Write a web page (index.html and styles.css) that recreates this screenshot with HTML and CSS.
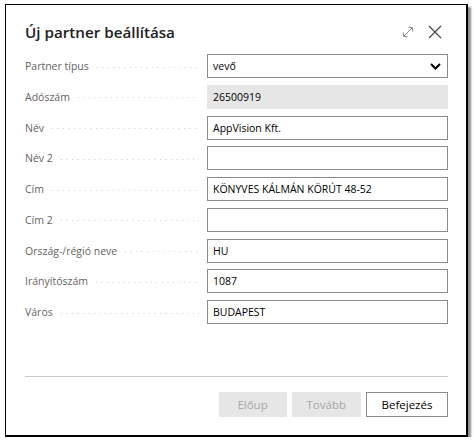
FILE: index.html
```html
<!DOCTYPE html>
<html lang="hu">
<head>
    <meta charset="UTF-8">
    <meta name="viewport" content="width=device-width, initial-scale=1.0">
    <title>Új partner beállítása</title>
    <link rel="stylesheet" href="styles.css">
</head>
<body>
    <div class="dialog">
        <div class="dialog-header">
            <h1>Új partner beállítása</h1>
            <div class="header-actions">
                <button class="icon-btn" title="Nagyítás">
                    <svg width="12" height="12" viewBox="0 0 12 12">
                        <path d="M1.5 10.5 L10.5 1.5 M1.5 10.5 L1.5 6.5 M1.5 10.5 L5.5 10.5 M10.5 1.5 L6.5 1.5 M10.5 1.5 L10.5 5.5" fill="none" stroke="#8a8a8a" stroke-width="1"/>
                    </svg>
                </button>
                <button class="icon-btn" title="Bezárás">
                    <svg width="14" height="14" viewBox="0 0 14 14">
                        <path d="M1 1 L13 13 M13 1 L1 13" fill="none" stroke="#444" stroke-width="1.2"/>
                    </svg>
                </button>
            </div>
        </div>

        <div class="form">
            <label class="field-label"><span>Partner típus</span><span class="leader"></span></label>
            <div class="field select">
                <span>vevő</span>
                <svg width="11" height="7" viewBox="0 0 11 7">
                    <path d="M1 1 L5.5 5.5 L10 1" fill="none" stroke="#000" stroke-width="2"/>
                </svg>
            </div>

            <label class="field-label"><span>Adószám</span><span class="leader"></span></label>
            <div class="field readonly">26500919</div>

            <label class="field-label"><span>Név</span><span class="leader"></span></label>
            <div class="field">AppVision Kft.</div>

            <label class="field-label"><span>Név 2</span><span class="leader"></span></label>
            <div class="field"></div>

            <label class="field-label"><span>Cím</span><span class="leader"></span></label>
            <div class="field">KÖNYVES KÁLMÁN KÖRÚT 48-52</div>

            <label class="field-label"><span>Cím 2</span><span class="leader"></span></label>
            <div class="field"></div>

            <label class="field-label"><span>Ország-/régió neve</span><span class="leader"></span></label>
            <div class="field">HU</div>

            <label class="field-label"><span>Irányítószám</span><span class="leader"></span></label>
            <div class="field">1087</div>

            <label class="field-label"><span>Város</span><span class="leader"></span></label>
            <div class="field">BUDAPEST</div>
        </div>

        <div class="dialog-footer">
            <button class="btn" disabled>Előup</button>
            <button class="btn" disabled>Tovább</button>
            <button class="btn primary">Befejezés</button>
        </div>
    </div>
</body>
</html>
```

FILE: styles.css
```css
body {
    margin: 0;
    background-color: #fff;
    font-family: 'Open Sans', 'Noto Sans', sans-serif;
    color: #212121;
}

.dialog {
    box-sizing: border-box;
    width: 463px;
    height: 433px;
    margin: 4px 0 0 5px;
    padding: 14px 18px 18px 19px;
    background-color: #fff;
    border-style: solid;
    border-color: #000;
    border-width: 1px 2px 2px 1px;
    box-shadow: 3px 3px 2px rgba(0,0,0,0.45);
    display: flex;
    flex-direction: column;
}

.dialog-header {
    display: flex;
    align-items: center;
    justify-content: space-between;
    height: 26px;
    margin-bottom: 9px;
}

h1 {
    margin: 0;
    font-size: 15.2px;
    font-weight: 600;
    color: #212121;
}

.header-actions {
    display: flex;
    align-items: center;
    gap: 14px;
    margin-right: 6px;
}

.icon-btn {
    padding: 0;
    border: none;
    background: none;
    display: flex;
    cursor: pointer;
}

.form {
    display: grid;
    grid-template-columns: 1fr 241px;
    column-gap: 8px;
    row-gap: 6.75px;
}

.field-label {
    display: flex;
    align-items: center;
    font-size: 10.5px;
    color: #66645f;
}

.leader {
    flex: 1;
    height: 1px;
    margin: 2px 0 0 8px;
    background-image: linear-gradient(to right, #c6c6c6 1px, transparent 1px);
    background-size: 5.5px 1px;
    background-repeat: repeat-x;
}

.field {
    box-sizing: border-box;
    height: 24px;
    padding: 0 5px;
    border: 1px solid #8a8a8a;
    font-size: 10.5px;
    color: #000;
    display: flex;
    align-items: center;
}

.field.readonly {
    border-color: #e6e6e6;
    background-color: #e6e6e6;
}

.field.select {
    justify-content: space-between;
    padding-right: 6px;
}

.dialog-footer {
    margin-top: auto;
    border-top: 1px solid #c8c8c8;
    padding-top: 15px;
    display: flex;
    justify-content: flex-end;
    gap: 5px;
}

.btn {
    box-sizing: border-box;
    height: 25px;
    min-width: 68px;
    padding: 0 14px;
    font-family: inherit;
    font-size: 11.5px;
    border: 1px solid #8a8a8a;
    background-color: #fff;
    color: #000;
}

.btn:disabled {
    border-color: #e6e6e6;
    background-color: #e6e6e6;
    color: #a6a6a6;
}

.btn.primary {
    min-width: 82px;
}
```
